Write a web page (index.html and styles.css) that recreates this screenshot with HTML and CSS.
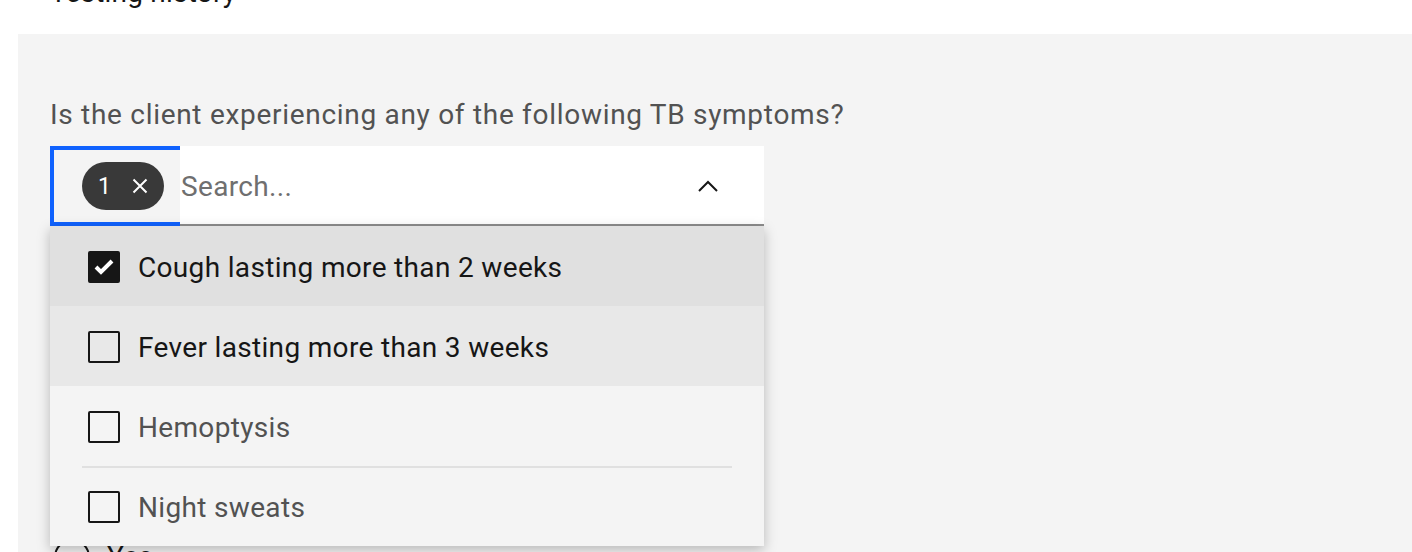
FILE: index.html
```html
<!DOCTYPE html>
<html lang="en">
<head>
<meta charset="utf-8">
<title>TB screening</title>
<link rel="stylesheet" href="styles.css">
</head>
<body>
  <h2 class="heading">Testing history</h2>
  <section class="panel">
    <div class="question">
      <div class="label">Is the client experiencing any of the following TB symptoms?</div>
      <div class="combo">
        <div class="field">
          <div class="selection">
            <span class="tag">
              <span class="tag-count">1</span>
              <svg class="tag-x" width="16" height="16" viewBox="0 0 16 16"><path d="M1.5 1.5 L14.5 14.5 M14.5 1.5 L1.5 14.5" stroke="#fff" stroke-width="2" fill="none"/></svg>
            </span>
          </div>
          <span class="placeholder">Search...</span>
          <svg class="chevron" width="20" height="12" viewBox="0 0 20 12"><polyline points="1,11 10,2 19,11" fill="none" stroke="#161616" stroke-width="2"/></svg>
        </div>
        <ul class="menu">
          <li class="item selected">
            <div class="opt">
              <span class="box checked"><svg width="32" height="32" viewBox="0 0 32 32"><polyline points="8,16 13,21 24,10" fill="none" stroke="#fff" stroke-width="4"/></svg></span>
              <span class="text">Cough lasting more than 2 weeks</span>
            </div>
          </li>
          <li class="item hover">
            <div class="opt">
              <span class="box"></span>
              <span class="text">Fever lasting more than 3 weeks</span>
            </div>
          </li>
          <li class="item">
            <div class="opt">
              <span class="box"></span>
              <span class="text">Hemoptysis</span>
            </div>
          </li>
          <li class="item">
            <div class="opt divided">
              <span class="box"></span>
              <span class="text">Night sweats</span>
            </div>
          </li>
        </ul>
      </div>
    </div>
    <div class="radio-row">
      <span class="radio"></span>
      <span class="radio-text">Yes</span>
    </div>
  </section>
</body>
</html>
```
FILE: styles.css
```css
html, body {
  margin: 0;
  padding: 0;
  background: #ffffff;
  font-family: Roboto, "Noto Sans", sans-serif;
  color: #161616;
}
.heading {
  margin: -25px 0 0 0;
  padding: 0 0 0 50px;
  height: 36px;
  font-size: 28px;
  line-height: 36px;
  font-weight: 400;
  letter-spacing: 0.2px;
}
.panel {
  margin: 23px 0 0 18px;
  padding: 63px 32px 40px 32px;
  background: #f4f4f4;
  height: 700px;
}
.label {
  font-size: 28px;
  line-height: 36px;
  color: #525252;
  letter-spacing: 0.7px;
  margin-bottom: 13px;
}
.combo {
  position: relative;
  width: 714px;
}
.field {
  height: 80px;
  display: flex;
  align-items: center;
  background: #ffffff;
  box-shadow: inset 0 -2px 0 #8d8d8d;
}
.selection {
  box-sizing: border-box;
  width: 130px;
  height: 80px;
  border: 4px solid #0f62fe;
  border-right: 0;
  background: #f4f4f4;
  display: flex;
  align-items: center;
  padding-left: 28px;
}
.tag {
  box-sizing: border-box;
  width: 82px;
  height: 48px;
  border-radius: 24px;
  background: #393939;
  color: #ffffff;
  display: flex;
  align-items: center;
  padding: 0 16px;
  font-size: 23px;
}
.tag-count {
  line-height: 1;
}
.tag-x {
  margin-left: auto;
}
.placeholder {
  flex: 1;
  margin-left: 1px;
  font-size: 28px;
  letter-spacing: 0.33px;
  color: #6f6f6f;
}
.chevron {
  margin-right: 46px;
}
.menu {
  position: absolute;
  top: 80px;
  left: 0;
  width: 714px;
  margin: 0;
  padding: 0;
  list-style: none;
  background: #f4f4f4;
  box-shadow: 0 4px 12px rgba(0, 0, 0, 0.25);
  z-index: 2;
}
.item {
  height: 80px;
  padding: 0 32px;
}
.item.selected {
  background: #e0e0e0;
}
.item.hover {
  background: #e8e8e8;
}
.opt {
  box-sizing: border-box;
  height: 80px;
  display: flex;
  align-items: center;
  border-top: 2px solid transparent;
}
.opt.divided {
  border-top-color: #e0e0e0;
}
.box {
  box-sizing: border-box;
  width: 32px;
  height: 32px;
  margin-left: 6px;
  border: 2px solid #161616;
  border-radius: 2px;
  flex: none;
  position: relative;
}
.box.checked {
  background: #161616;
}
.box.checked svg {
  position: absolute;
  left: -2px;
  top: -2px;
}
.text {
  margin-left: 18px;
  font-size: 28px;
  letter-spacing: 0.33px;
  color: #525252;
}
.item.selected .text,
.item.hover .text {
  color: #161616;
}
.radio-row {
  margin-top: 313px;
  display: flex;
  align-items: center;
  height: 36px;
}
.radio {
  box-sizing: border-box;
  width: 36px;
  height: 36px;
  margin-left: 4px;
  border: 2px solid #161616;
  border-radius: 50%;
}
.radio-text {
  margin-left: 17px;
  font-size: 28px;
  line-height: 36px;
  letter-spacing: 0.33px;
}
```
